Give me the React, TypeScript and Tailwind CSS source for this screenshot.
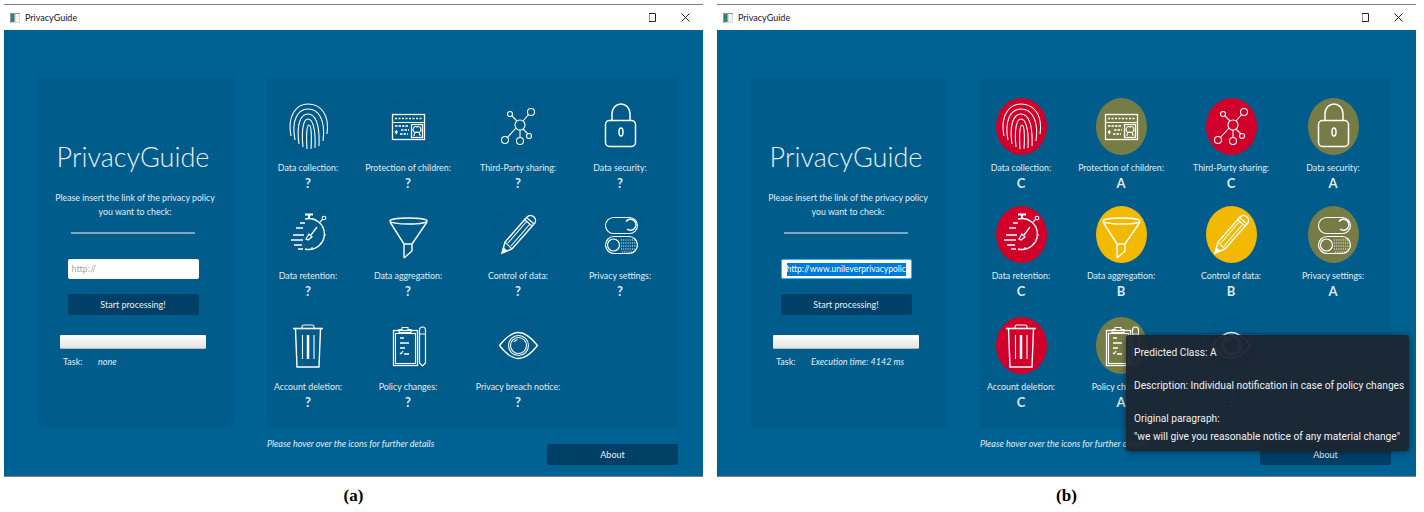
import type { ReactNode } from "react";

type Grade = "A" | "B" | "C";

const ui = "font-['Lato','Open_Sans',sans-serif]";

const circleColors: Record<Grade, string> = {
  A: "bg-[#767c46]",
  B: "bg-[#f2b900]",
  C: "bg-[#d0002a]",
};

const icons: Record<string, ReactNode> = {
  fingerprint: (
    <>
      <path d="M8 38C4 18 13 6 25 6s22 10 19 30" />
      <path d="M12 42C8 22 15 11 25 11s18 10 15 32" />
      <path d="M16 46C13 26 18 16 25 16s12 9 11 32" />
      <path d="M20 49C18 30 21 21 25 21s8 8 7 29" />
      <path d="M24 51C23 35 24 27 26 27s3 8 2 24" />
    </>
  ),
  browser: (
    <>
      <rect x="9.500" y="16.500" width="32" height="25" strokeWidth="1.300" />
      <path d="M9.500 24.500h32" />
      <path d="M12 20.500h27" strokeDasharray="2 1.500" strokeWidth="1.500" />
      <rect x="28.500" y="26.500" width="11" height="13" strokeWidth="1.300" />
      <path d="M31 38c0-3 1-4 3-4s3 1 3 4M34 34a2.500 3 0 1 0 0-5 2.500 3 0 1 0 0 5" />
      <path d="M12 28h13M18 32h8M17 36h8" strokeDasharray="2.500 1" strokeWidth="1.300" />
      <path d="M12 34l2-1.500M12 34l2 2M12 34h3" />
    </>
  ),
  network: (
    <>
      <circle cx="27" cy="27" r="5" />
      <circle cx="17" cy="16" r="2.500" />
      <circle cx="38" cy="14" r="3.500" />
      <circle cx="12" cy="42" r="3.500" />
      <circle cx="27" cy="43" r="3.500" />
      <circle cx="36" cy="38" r="2.500" />
      <path d="M19 18l5 5M30 23l6-7M23 30l-9 10M27 32v7.500M30 31l5 5" />
    </>
  ),
  lock: (
    <>
      <rect x="10.500" y="22.500" width="30" height="26" rx="4" strokeWidth="1.500" />
      <path d="M17 22v-6c0-6 4-10 9-10s9 4 9 10v6" strokeWidth="1.500" />
      <ellipse cx="26" cy="34" rx="2" ry="4" strokeWidth="1.500" />
    </>
  ),
  stopwatch: (
    <>
      <path d="M22 13a15.500 15.500 0 1 1 0 30" strokeWidth="1.400" />
      <path d="M22 8.500h8M26 8.500v4" strokeWidth="2" />
      <path d="M37 16l3-3" />
      <circle cx="41" cy="12" r="1.800" />
      <path d="M17 17h5M13 22h7M10 29h11M8 34h12M11 39h8M15 43h5" strokeWidth="1.500" />
      <path d="M34 21l-6 8" strokeWidth="1.300" />
      <path d="M23 33l3-5 3 3-4 3z" strokeWidth="1.300" />
      <path d="M29 43v-2M38 38l-1-1M43 29h-2" />
    </>
  ),
  funnel: (
    <>
      <ellipse cx="25.500" cy="15" rx="18.500" ry="3" strokeWidth="1.400" />
      <path d="M7 16l14 22M44 16L29 38M21 38h8M21 38v14M29 38v7l-8 7" strokeWidth="1.400" />
    </>
  ),
  pencil: (
    <>
      <path d="M9 47l3-11 22-25c2-2 5-2 7 0s2 5 0 7L19 43z" strokeWidth="1.400" />
      <path d="M12 36l7 7M15 37l19-22M18 40l19-22M31 13l8 7M33 11l8 7" />
      <path d="M9 47l1.500-5 3.500 3z" fill="#fff" />
    </>
  ),
  toggles: (
    <>
      <rect x="10.500" y="11.500" width="32" height="16" rx="8" />
      <path d="M31 15.500a5.500 5.500 0 1 1 1 7.500" strokeWidth="1.500" />
      <rect x="10.500" y="30.500" width="32" height="17" rx="8.500" strokeWidth="1.200" />
      <circle cx="18.500" cy="39" r="6" strokeWidth="1.200" />
      <path d="M26 34h15M26 37h16M26 40h16M26 43h15M27 46h12" strokeDasharray="1 1.200" />
    </>
  ),
  trash: (
    <>
      <path d="M10 11.500h30" strokeWidth="1.600" />
      <path d="M19 11V9.500c0-1 1-1.500 2-1.500h8c1 0 2 .5 2 1.500V11" />
      <path d="M12.500 12l1.500 38h22l1.500-38" strokeWidth="1.400" />
      <path d="M19.500 18v24M31 18v24" />
      <path d="M25 18v24" strokeWidth="2.500" />
    </>
  ),
  clipboard: (
    <>
      <rect x="10.500" y="13.500" width="24" height="35" strokeWidth="1.300" />
      <rect x="12.500" y="16.500" width="20" height="30" />
      <path d="M16 15.500v-3h3v-2h6v2h3v3z" />
      <path d="M36.500 13v33l3 3 3-3V13a3 3 0 0 0-6 0zM36.500 17h6" strokeWidth="1.200" />
      <path d="M17 21h4M17 26h9M17 31h5M18 37l2-3M17 36l1 1M21 37h5" strokeWidth="1.300" />
    </>
  ),
  eye: (
    <>
      <path d="M6.500 28.500C14 19 20 15.500 25.500 15.500S37 19 44.500 28.500C37 38 31 41.500 25.500 41.500S14 38 6.500 28.500z" strokeWidth="1.300" />
      <circle cx="25.500" cy="28.500" r="10" />
      <circle cx="25.500" cy="28.500" r="8" />
      <path d="M21 25c1-1.500 2-2 3.500-2.500" />
    </>
  ),
};

const items = [
  { label: "Data collection:", icon: "fingerprint", grade: "C" },
  { label: "Protection of children:", icon: "browser", grade: "A" },
  { label: "Third-Party sharing:", icon: "network", grade: "C" },
  { label: "Data security:", icon: "lock", grade: "A" },
  { label: "Data retention:", icon: "stopwatch", grade: "C" },
  { label: "Data aggregation:", icon: "funnel", grade: "B" },
  { label: "Control of data:", icon: "pencil", grade: "B" },
  { label: "Privacy settings:", icon: "toggles", grade: "A" },
  { label: "Account deletion:", icon: "trash", grade: "C" },
  { label: "Policy changes:", icon: "clipboard", grade: "A" },
  { label: "Privacy breach notice:", icon: "eye", grade: null },
] as { label: string; icon: string; grade: Grade | null }[];

function Category({
  item,
  checked,
}: {
  item: (typeof items)[number];
  checked: boolean;
}) {
  const grade = checked ? item.grade : null;
  return (
    <div className="flex flex-col items-center">
      <div
        className={`h-[57px] w-[51px] rounded-[50%] ${
          grade ? circleColors[grade] : "bg-[#005a8a]"
        }`}
      >
        <svg
          viewBox="0 0 51 57"
          width="51"
          height="57"
          fill="none"
          stroke="#fff"
          strokeWidth="1.100"
        >
          {icons[item.icon]}
        </svg>
      </div>
      <p className="mt-[6px] h-[14px] text-[8.800px] leading-[14px] whitespace-nowrap text-[#e3edf2]">
        {item.label}
      </p>
      <p className="h-[16px] text-[13px] leading-[16px] font-bold text-[#dfe9ef]">
        {grade ?? "?"}
      </p>
    </div>
  );
}

function AppWindow({ checked }: { checked: boolean }) {
  return (
    <div className={`relative flex h-[473px] w-[699px] flex-col border-t-[1px] border-b-[1px] border-[#808080] bg-white ${ui}`}>
      <div className="flex h-[25px] shrink-0 items-center pr-[13px] pl-[6px]">
        <svg viewBox="0 0 10 10" width="10" height="10" className="shrink-0">
          <rect width="10" height="10" fill="#d5dcdc" />
          <rect x="1" y="1" width="3.500" height="8" fill="#2f7f76" />
          <rect x="6" y="1" width="3" height="8" fill="#f2f4f4" />
          <path d="M0 .5h10M.5 0v10" stroke="#8f9a9f" />
        </svg>
        <span className="ml-[5px] text-[9px] text-[#1a1030]">PrivacyGuide</span>
        <svg viewBox="0 0 8 9" width="8" height="9" className="ml-auto" fill="none" stroke="#222">
          <path d="M1 .5h6.500v8H1" />
          <path d="M1.500 1v7" stroke="#999" />
        </svg>
        <svg viewBox="0 0 9 9" width="9" height="9" className="ml-[25px]" fill="none" stroke="#222">
          <path d="M.5.5l8 8M8.500.5l-8 8" />
        </svg>
      </div>

      <div className="relative flex flex-1 bg-[#006193] pt-[48px] pl-[34px]">
        <div className="flex h-[350px] w-[196px] flex-col items-center bg-[#005c8b] pt-[59px] pr-[6px]">
          <h1 className="h-[40px] text-[27px] leading-[40px] font-light whitespace-nowrap text-[#e8eef2]">
            PrivacyGuide
          </h1>
          <p className="mt-[14px] w-[190px] pl-[4px] text-center text-[8.800px] leading-[14px] text-[#e3edf2]">
            Please insert the link of the privacy policy
            <br />
            you want to check:
          </p>
          <div className="mt-[13px] h-[2px] w-[124px] bg-[#7fa6bf]" />
          {checked ? (
            <div className="mt-[25px] flex h-[20px] w-[131px] items-center overflow-hidden rounded-[2px] border border-[#35b4f0] bg-white px-[5px]">
              <span className="block h-[13px] w-full overflow-hidden bg-[#0078d7] text-[8.500px] leading-[13px] whitespace-nowrap text-white">
                http://www.unileverprivacypolicy.com
              </span>
            </div>
          ) : (
            <div className="mt-[25px] flex h-[20px] w-[131px] items-center rounded-[2px] bg-white px-[4px] text-[9px] text-[#a8a8a8]">
              http://
            </div>
          )}
          <button className="mt-[15px] h-[21px] w-[131px] rounded-[2px] bg-[#003f66] text-[9px] text-[#e8f0f5]">
            Start processing!
          </button>
          <div className="mt-[20px] h-[14px] w-[146px] rounded-[1px] border-b border-[#b8b8b8] bg-linear-to-b from-white to-[#e4e4e4]" />
          <div className="mt-[6px] flex h-[14px] self-start pl-[25px] text-[9px] leading-[14px] text-[#e3edf2]">
            <span className="w-[35px]">Task:</span>
            <span className="italic">
              {checked ? "Execution time: 4142 ms" : "none"}
            </span>
          </div>
        </div>

        <div className="ml-[33px] flex w-[411px] flex-col">
          <div className="grid h-[350px] grid-cols-[82px_118px_102px_102px] grid-rows-[108px_111px_auto] bg-[#005c8b] pt-[20px]">
            {items.map((item) => (
              <Category key={item.label} item={item} checked={checked} />
            ))}
          </div>
          <div className="mt-[10px] flex items-start justify-between">
            <p className="text-[9px] leading-[12px] whitespace-nowrap text-[#e3edf2] italic">
              Please hover over the icons for further details
            </p>
            <button className="mt-[6px] h-[21px] w-[131px] rounded-[2px] bg-[#003f66] text-[9px] text-[#e8f0f5]">
              About
            </button>
          </div>
        </div>

        {checked && (
          <div className="absolute top-[305px] left-[409px] h-[116px] w-[283px] rounded-[3px] bg-[#1c2530]/95 px-[8px] pt-[11px] font-['Roboto',sans-serif] text-[10.200px] leading-[14px] whitespace-nowrap text-[#eef2f4] shadow-[0_1px_6px_rgba(0,0,0,0.5)]">
            <p>Predicted Class: A</p>
            <p className="mt-[19px]">
              Description: Individual notification in case of policy changes
            </p>
            <p className="mt-[19px]">Original paragraph:</p>
            <p className="mt-[4px]">
              "we will give you reasonable notice of any material change"
            </p>
          </div>
        )}
      </div>
    </div>
  );
}

function Figure({ checked, caption }: { checked: boolean; caption: string }) {
  return (
    <div className="flex flex-col items-center">
      <AppWindow checked={checked} />
      <p className="mt-[10px] font-['Liberation_Serif',serif] text-[17px] leading-[18px] font-bold text-black">
        {caption}
      </p>
    </div>
  );
}

export default function App() {
  return (
    <div className="flex h-[512px] w-[1424px] gap-[14px] overflow-hidden bg-white pt-[4px] pl-[4px]">
      <Figure checked={false} caption="(a)" />
      <Figure checked caption="(b)" />
    </div>
  );
}
